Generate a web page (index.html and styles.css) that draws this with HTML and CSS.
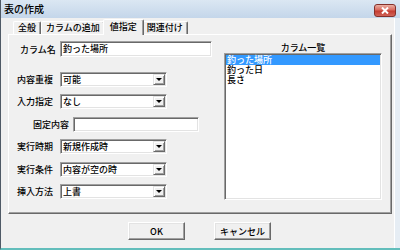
FILE: index.html
```html
<!DOCTYPE html>
<html>
<head>
	<meta charset="utf-8">
	<title>表の作成</title>
	<link rel="stylesheet" href="styles.css">
</head>
<body>
<div class="window">
	<div class="titlebar">
		<span class="title">表の作成</span>
		<span class="close"><svg width="10" height="7" viewBox="0 0 10 7"><path d="M2 0.5L8 6.5M8 0.5L2 6.5" stroke="#fff" stroke-width="2"/></svg></span>
	</div>
	<div class="client">
		<div class="tabs">
			<span class="tab">全般</span>
			<span class="tab">カラムの追加</span>
			<span class="tab on">値指定</span>
			<span class="tab">関連付け</span>
		</div>
		<div class="panel">
			<div class="fields">
				<div class="row name"><label>カラム名</label><div class="edit">釣った場所</div></div>
				<div class="row first"><label>内容重複</label><div class="combo"><span>可能</span><i></i></div></div>
				<div class="row"><label>入力指定</label><div class="combo"><span>なし</span><i></i></div></div>
				<div class="row fixed"><label>固定内容</label><div class="edit"></div></div>
				<div class="row"><label>実行時期</label><div class="combo"><span>新規作成時</span><i></i></div></div>
				<div class="row"><label>実行条件</label><div class="combo"><span>内容が空の時</span><i></i></div></div>
				<div class="row"><label>挿入方法</label><div class="combo"><span>上書</span><i></i></div></div>
			</div>
			<div class="columns">
				<div class="caption">カラム一覧</div>
				<div class="listbox">
					<div class="item sel">釣った場所</div>
					<div class="item">釣った日</div>
					<div class="item">長さ</div>
				</div>
			</div>
		</div>
		<div class="buttons">
			<button>OK</button>
			<button>キャンセル</button>
		</div>
	</div>
</div>
</body>
</html>
```
FILE: styles.css
```css
*{margin:0;padding:0;box-sizing:border-box;}
body{font:500 9px "Noto Sans CJK JP","Liberation Sans",sans-serif;color:#000;}
.window{width:400px;height:250px;display:flex;flex-direction:column;border-left:1px solid #4f5a66;border-bottom:2px solid #62bdbb;background:#e6edf4;}
.titlebar{height:18px;flex:none;display:flex;justify-content:space-between;align-items:flex-start;padding:0 4px 0 3px;background:linear-gradient(#dbe7f3,#c4d6ea);}
.title{font-size:10px;line-height:18px;}
.close{margin-top:4px;width:22px;height:13px;display:flex;align-items:center;justify-content:center;border:1px solid #84302a;border-radius:3px;background:linear-gradient(#eab0a4,#d9695d 45%,#c43c31 55%,#d06358);}
.client{flex:1;margin-right:5px;background:#f0f0f0;border-right:1px solid #fff;}

.tabs{height:16px;display:flex;align-items:flex-end;padding-left:12px;}
.tab{height:13px;line-height:12px;padding:0 4px;border:1px solid;border-bottom:0;border-color:#fff #696969 transparent #fff;border-radius:2px 2px 0 0;box-shadow:inset -1px 0 #a0a0a0;}
.tab.on{position:relative;height:16px;margin:0 -2px -1px;padding:0 6px;line-height:13px;background:#f0f0f0;}

.panel{width:384px;height:180px;margin-left:7px;display:flex;gap:12px;padding:6px 8px 0;border:1px solid;border-color:#fff #696969 #696969 #fff;box-shadow:inset -1px -1px #a0a0a0;}
.fields{width:195px;display:flex;flex-direction:column;}
.row{display:flex;align-items:center;height:15px;margin-top:7.4px;}
.row label{width:43px;}
.row.name{height:16px;margin-top:0;}
.row.name label{padding-left:3px;}
.row.first{margin-top:15px;}
.row.fixed{padding-left:16px;}
.row.fixed label{width:40px;}

.edit,.combo{height:100%;padding:1px;border:1px solid;border-color:#a0a0a0 #fff #fff #a0a0a0;box-shadow:inset 1px 1px #696969,inset -1px -1px #e3e3e3;background:#fff;line-height:11px;}
.edit{width:152px;padding-left:2px;}
.fixed .edit{width:126px;}
.combo{width:107px;display:flex;}
.combo span{flex:1;padding-left:1px;}
.combo i{width:12px;height:100%;display:flex;align-items:center;justify-content:center;background:#f0f0f0;border:1px solid;border-color:#e3e3e3 #696969 #696969 #e3e3e3;box-shadow:inset 1px 1px #fff,inset -1px -1px #a0a0a0;}
.combo i:after{content:"";border-left:3px solid transparent;border-right:3px solid transparent;border-top:3px solid #000;}

.columns{width:158px;padding-top:1px;}
.caption{line-height:11px;text-align:center;}
.listbox{height:147px;padding:1px;border:1px solid;border-color:#a0a0a0 #fff #fff #a0a0a0;box-shadow:inset 1px 1px #696969,inset -1px -1px #e3e3e3;background:#fff;}
.item{line-height:10px;padding-left:1px;}
.item.sel{background:#3399ff;color:#fff;}

.buttons{display:flex;justify-content:center;gap:29px;margin-top:8px;padding-left:4px;}
button{width:57px;height:18px;font:500 9px "Noto Sans CJK JP","Liberation Sans",sans-serif;background:#f0f0f0;border:1px solid;border-color:#fff #696969 #696969 #fff;box-shadow:inset -1px -1px #a0a0a0,inset 1px 1px #e3e3e3;}
```
